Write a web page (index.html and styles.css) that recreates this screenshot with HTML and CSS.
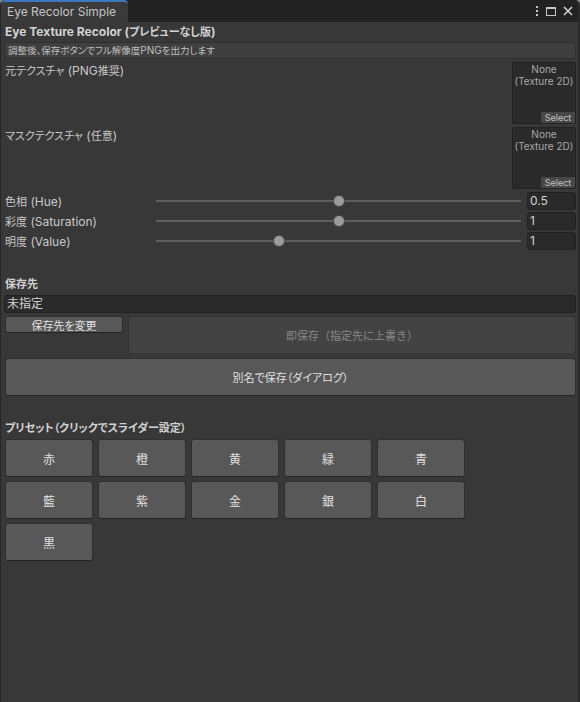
FILE: index.html
```html
<!DOCTYPE html>
<html lang="ja">
<head>
<meta charset="utf-8">
<title>Eye Recolor Simple</title>
<link rel="stylesheet" href="styles.css">
</head>
<body>
<div class="window">
  <div class="tabbar">
    <div class="tab">Eye Recolor Simple</div>
    <div class="tab-icons">
      <svg class="ico" width="6" height="12" viewBox="0 0 6 12"><rect x="2" y="1" width="2" height="2" fill="#c8c8c8"/><rect x="2" y="5" width="2" height="2" fill="#c8c8c8"/><rect x="2" y="9" width="2" height="2" fill="#c8c8c8"/></svg>
      <svg class="ico" width="12" height="12" viewBox="0 0 12 12"><rect x="1.5" y="2.5" width="9" height="8" fill="none" stroke="#c8c8c8" stroke-width="1"/><rect x="1" y="2" width="10" height="2" fill="#c8c8c8"/></svg>
      <svg class="ico" width="12" height="12" viewBox="0 0 12 12"><path d="M2 2 L10 10 M10 2 L2 10" stroke="#d0d0d0" stroke-width="1.6" fill="none"/></svg>
    </div>
  </div>
  <div class="content">
    <div class="title">Eye Texture Recolor (<span class="j">プレビューなし版</span>)</div>
    <div class="help"><span class="j">調整後、保存ボタンでフル解像度</span>PNG<span class="j">を出力します</span></div>

    <div class="objrow">
      <div class="label"><span class="j">元テクスチャ</span> (PNG<span class="j">推奨</span>)</div>
      <div class="objfield">
        <div class="objtext">None<br>(Texture 2D)</div>
        <div class="select">Select</div>
      </div>
    </div>
    <div class="objrow second">
      <div class="label"><span class="j">マスクテクスチャ</span> (<span class="j">任意</span>)</div>
      <div class="objfield">
        <div class="objtext">None<br>(Texture 2D)</div>
        <div class="select">Select</div>
      </div>
    </div>

    <div class="sliders">
      <div class="srow">
        <div class="slabel"><span class="j">色相</span> (Hue)</div>
        <div class="track"><div class="thumb" style="left: 50%"></div></div>
        <div class="num">0.5</div>
      </div>
      <div class="srow">
        <div class="slabel"><span class="j">彩度</span> (Saturation)</div>
        <div class="track"><div class="thumb" style="left: 50%"></div></div>
        <div class="num">1</div>
      </div>
      <div class="srow">
        <div class="slabel"><span class="j">明度</span> (Value)</div>
        <div class="track"><div class="thumb" style="left: 33.7%"></div></div>
        <div class="num">1</div>
      </div>
    </div>

    <div class="header save-header"><span class="j">保存先</span></div>
    <div class="textfield">未指定</div>
    <div class="saverow">
      <div class="btn small"><span class="j">保存先を変更</span></div>
      <div class="btn disabled big"><span class="j wide">即保存（指定先に上書き）</span></div>
    </div>
    <div class="btn big full"><span class="j">別名で保存（ダイアログ）</span></div>

    <div class="header preset-header"><span class="j">プリセット（クリックでスライダー設定）</span></div>
    <div class="presets">
      <div class="btn preset">赤</div>
      <div class="btn preset">橙</div>
      <div class="btn preset">黄</div>
      <div class="btn preset">緑</div>
      <div class="btn preset">青</div>
      <div class="btn preset">藍</div>
      <div class="btn preset">紫</div>
      <div class="btn preset">金</div>
      <div class="btn preset">銀</div>
      <div class="btn preset">白</div>
      <div class="btn preset">黒</div>
    </div>
  </div>
</div>
</body>
</html>
```
FILE: styles.css
```css
html, body {
  margin: 0;
  padding: 0;
  background: #8a8a8a;
}
body {
  width: 580px;
  height: 702px;
  font-family: "Inter", "Noto Sans CJK JP", sans-serif;
  font-size: 12px;
  color: #c8c8c8;
  overflow: hidden;
}
.j {
  font-size: 11px;
  font-feature-settings: "palt";
}
.j.wide {
  font-feature-settings: normal;
}
.window {
  width: 580px;
  height: 702px;
  box-sizing: border-box;
  background: #383838;
  border-left: 1px solid #262626;
  border-right: 2px solid #2a2a2a;
  border-radius: 5px 5px 0 0;
  overflow: hidden;
  display: flex;
  flex-direction: column;
}
.tabbar {
  height: 22px;
  flex: none;
  background: #222222;
  display: flex;
  align-items: stretch;
  justify-content: space-between;
}
.tab {
  width: 127px;
  padding-left: 6px;
  background: #3a3a3a;
  border-top: 2px solid #3b78bd;
  border-radius: 4px 4px 0 0;
  box-sizing: border-box;
  line-height: 20px;
  font-size: 12px;
  color: #c4c4c4;
  white-space: nowrap;
}
.tab-icons {
  display: flex;
  align-items: center;
  gap: 5px;
  padding-right: 4px;
}
.ico { display: block; }
.content {
  padding: 1px 2px 0 3px;
  display: flex;
  flex-direction: column;
}
.title {
  font-weight: bold;
  line-height: 18px;
  padding-left: 1px;
  color: #d2d2d2;
}
.help {
  margin-top: 1px;
  height: 17px;
  box-sizing: border-box;
  background: #3f3f3f;
  border: 1px solid #2f2f2f;
  border-radius: 3px;
  font-size: 10px;
  line-height: 15px;
  padding-left: 3px;
  color: #c0c0c0;
}
.help .j { font-size: 9.5px; }
.objrow {
  margin-top: 3px;
  display: flex;
  justify-content: space-between;
}
.objrow.second { margin-top: 3px; }
.label {
  line-height: 18px;
  padding-left: 1px;
}
.objfield {
  width: 64px;
  height: 62px;
  box-sizing: border-box;
  background: #2a2a2a;
  border: 1px solid #222222;
  border-radius: 2px;
  display: flex;
  flex-direction: column;
  justify-content: space-between;
  align-items: flex-end;
}
.objtext {
  align-self: stretch;
  text-align: center;
  font-size: 10px;
  line-height: 12px;
  color: #a8a8a8;
  white-space: nowrap;
}
.select {
  width: 34px;
  height: 11px;
  background: #474747;
  font-size: 9px;
  line-height: 11px;
  text-align: center;
  color: #c4c4c4;
}
.sliders {
  margin-top: 3px;
  display: flex;
  flex-direction: column;
  gap: 2px;
}
.srow {
  height: 18px;
  display: flex;
  align-items: center;
}
.slabel {
  width: 152px;
  flex: none;
  padding-left: 1px;
  box-sizing: border-box;
}
.track {
  flex: 1;
  height: 2px;
  background: #5e5e5e;
  position: relative;
  margin-right: 6px;
}
.thumb {
  position: absolute;
  top: -4px;
  width: 10px;
  height: 10px;
  margin-left: -5px;
  border-radius: 50%;
  background: #9b9b9b;
  box-shadow: 0 0 0 1px #505050;
}
.num {
  width: 49px;
  height: 18px;
  flex: none;
  box-sizing: border-box;
  background: #2a2a2a;
  border: 1px solid #212121;
  border-radius: 3px;
  padding-left: 2px;
  line-height: 16px;
  color: #d2d2d2;
}
.header {
  font-weight: bold;
  line-height: 18px;
  padding-left: 1px;
  color: #d2d2d2;
}
.save-header { margin-top: 25px; }
.textfield {
  margin-top: 2px;
  height: 18px;
  box-sizing: border-box;
  background: #2a2a2a;
  border: 1px solid #212121;
  border-radius: 3px;
  padding-left: 2px;
  line-height: 16px;
  color: #d2d2d2;
}
.saverow {
  margin-top: 3px;
  display: flex;
  align-items: flex-start;
  gap: 5px;
}
.btn {
  box-sizing: border-box;
  background: #585858;
  border: 1px solid #303030;
  border-bottom-color: #242424;
  border-radius: 3px;
  color: #e0e0e0;
  text-align: center;
  display: flex;
  align-items: center;
  justify-content: center;
  white-space: nowrap;
}
.btn.small {
  width: 118px;
  height: 17px;
  margin-left: 1px;
}
.btn.big { height: 38px; }
.saverow .btn.big { flex: 1; }
.btn.disabled {
  background: #434343;
  border-color: #333333;
  color: #878787;
}
.btn.full {
  margin-top: 4px;
  margin-left: 1px;
}
.preset-header { margin-top: 23px; }
.presets {
  margin-top: 2px;
  margin-left: 1px;
  display: grid;
  grid-template-columns: repeat(5, 88px);
  grid-auto-rows: 38px;
  column-gap: 5px;
  row-gap: 4px;
}
```
